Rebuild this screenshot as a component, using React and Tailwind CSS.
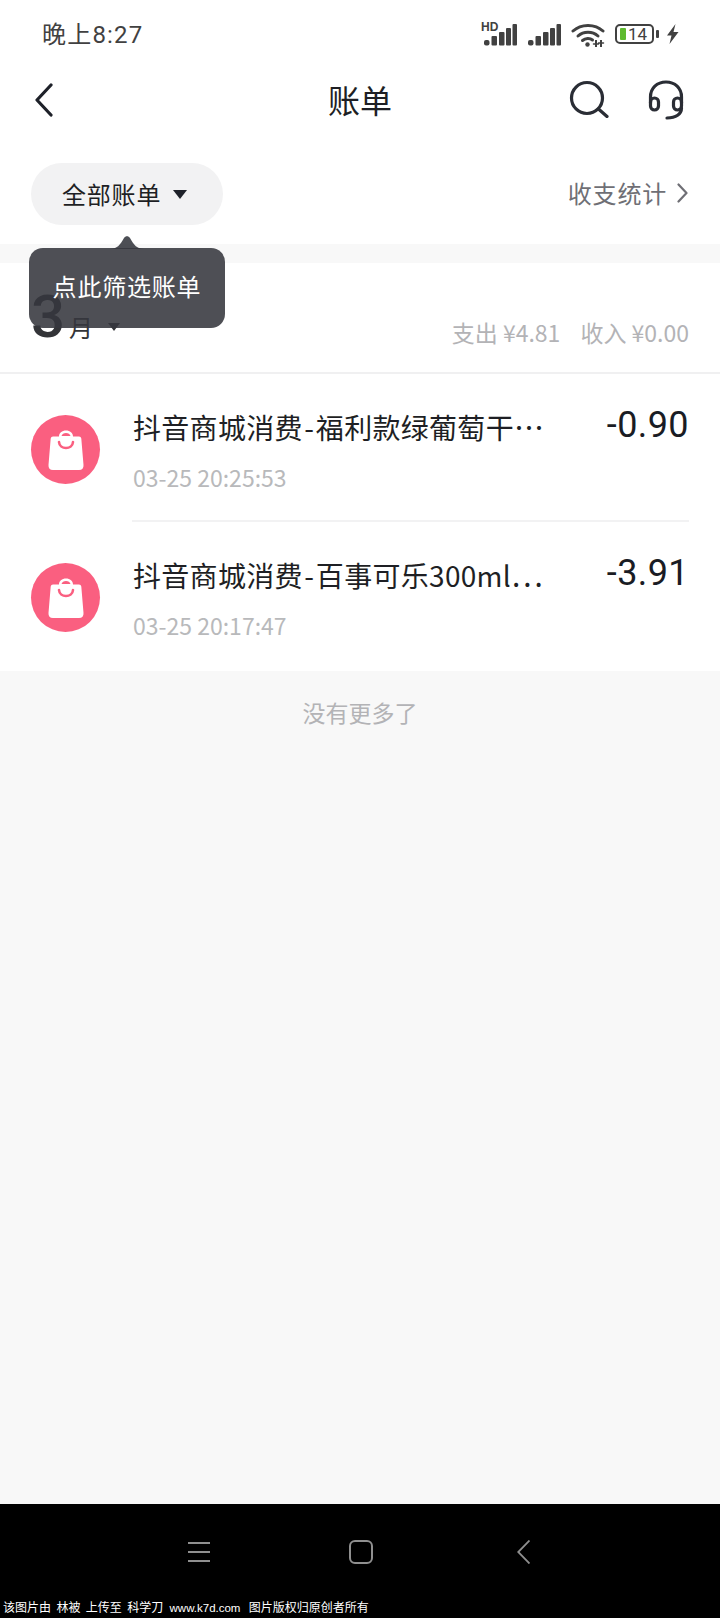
const FONT = '"Noto Sans CJK SC", "Noto Sans", sans-serif';

function SignalBars({ width = 34 }) {
  return (
    <svg width={width} height="22" viewBox="0 0 34 22" fill="#414141">
      <rect x="1" y="16" width="5.5" height="5.5" rx="2" />
      <rect x="8.5" y="12" width="5.5" height="9.5" rx="1" />
      <rect x="16" y="8" width="5.5" height="13.5" rx="1" />
      <rect x="23" y="4" width="5" height="17.5" rx="1" />
      <rect x="29.5" y="0" width="4.5" height="21.5" rx="1" />
    </svg>
  );
}

function Wifi() {
  return (
    <svg width="34" height="26" viewBox="0 0 34 26" fill="none" stroke="#414141" strokeWidth="3" strokeLinecap="round">
      <path d="M2 9C10 1.5 24 1.5 32 9" />
      <path d="M7 14C12.5 9 21.5 9 27 14" />
      <path d="M11.5 18.5C14.5 16 19 16 21.5 18" />
      <circle cx="16.5" cy="22.5" r="2.2" fill="#414141" stroke="none" />
      <path d="M25 18v7M30 18v7" strokeWidth="2" strokeLinecap="butt" />
      <path d="M22.5 22h5M27.5 21h5" strokeWidth="1.5" />
    </svg>
  );
}

function Bolt() {
  return (
    <svg width="13" height="20" viewBox="0 0 13 20" fill="#414141">
      <path d="M9.5 0L1 11.5H5.5L3.5 20L12.5 8H7.5Z" />
    </svg>
  );
}

function Chevron({ className, stroke, strokeWidth, d = "M17 2L3 17L17 32", box = "0 0 20 34" }) {
  return (
    <svg className={className} viewBox={box} fill="none" stroke={stroke} strokeWidth={strokeWidth} strokeLinecap="round" strokeLinejoin="round">
      <path d={d} />
    </svg>
  );
}

function ShopBag() {
  return (
    <div className="w-[69px] h-[69px] mt-[41px] rounded-full bg-[#fa5f80] flex items-center justify-center shrink-0">
      <svg width="36" height="40" viewBox="0 0 36 40">
        <path d="M11 6.5C11 3 14 .5 18 .5S25 3 25 6.5H31Q33 6.5 33.3 8.5L35.5 35Q35.8 40 31 40H5Q.2 40 .5 35L2.7 8.5Q3 6.5 5 6.5Z" fill="#ffffff" />
        <path d="M13.5 6C14 4 15.8 3 18 3S22 4 22.5 6Z" fill="#fa5f80" />
        <path d="M11 12C11.5 20 24.5 20 25 12" fill="none" stroke="#fa5f80" strokeWidth="2.6" strokeLinecap="round" />
      </svg>
    </div>
  );
}

function BillRow({ item, time, amount, divided, height }) {
  return (
    <div className={`${height} flex items-start pl-[31px] pr-[31px]`}>
      <ShopBag />
      <div className={`ml-[32px] flex-1 h-[148px] flex justify-between ${divided ? "border-b-2 border-[#f2f2f3]" : ""}`}>
        <div className="pt-[31px] pl-[1px]">
          <div className="text-[28px] leading-[42px] text-[#1e1f24] tracking-[0.3px] whitespace-nowrap">
            抖音商城消费<span className="mx-[1.5px]">-</span>{item}<span className="text-[30px] leading-[42px]">⋯</span>
          </div>
          <div className="mt-[13px] text-[23px] leading-[32px] text-[#b8b9bb] whitespace-nowrap">{time}</div>
        </div>
        <div className="pt-[30px] text-[36px] leading-[42px] tracking-[0.4px] text-[#1a1c24] whitespace-nowrap" style={{ fontFamily: "Roboto, sans-serif" }}>
          {amount}
        </div>
      </div>
    </div>
  );
}

export default function App() {
  return (
    <div className="w-[720px] h-[1618px] flex flex-col bg-[#f8f8f8] overflow-hidden" style={{ fontFamily: FONT }}>
      {/* Status bar */}
      <div className="h-[66px] bg-white flex items-center justify-between pl-[42px] pr-[41px] shrink-0">
        <span className="mt-[4px] text-[24px] leading-[32px] text-[#414141] tracking-[1.2px]" style={{ fontFamily: 'Roboto, "Noto Sans CJK SC", sans-serif' }}>
          晚上8:27
        </span>
        <div className="flex items-center mt-[2px]">
          <div className="relative w-[35px] h-[22px] mt-[2px]">
            <span className="absolute -left-[2px] -top-[2px] text-[12px] leading-[10px] font-bold text-[#414141]" style={{ fontFamily: '"Liberation Sans", sans-serif' }}>HD</span>
            <SignalBars />
          </div>
          <div className="ml-[9px] mt-[2px]"><SignalBars /></div>
          <div className="ml-[10px] mt-[2px]"><Wifi /></div>
          <div className="ml-[10px] w-[39px] h-[20px] border-2 border-[#414141] rounded-[5px] flex items-center pl-[3px]">
            <div className="w-[6px] h-[12px] bg-[#5fba2f] rounded-[1px]" />
            <span className="ml-[2px] text-[17px] leading-[16px] text-[#414141]" style={{ fontFamily: 'Roboto, sans-serif' }}>14</span>
          </div>
          <div className="ml-[2px] w-[3px] h-[8px] bg-[#414141] rounded-[1px]" />
          <div className="ml-[7px]"><Bolt /></div>
        </div>
      </div>

      {/* Navigation bar */}
      <div className="h-[68px] bg-white relative flex items-center justify-between pl-[34px] pr-[36px] shrink-0">
        <Chevron className="w-[20px] h-[34px]" stroke="#1e2129" strokeWidth="3.2" />
        <span className="absolute left-0 right-0 -mt-[2px] text-center text-[32px] leading-[44px] text-[#1e1f24]">账单</span>
        <div className="flex items-center">
          <svg className="-mt-[2px] -ml-[1px]" width="40" height="38" viewBox="0 0 40 38" fill="none" stroke="#2a2d35" strokeWidth="3.2" strokeLinecap="round">
            <circle cx="18" cy="18" r="15.5" />
            <path d="M29.5 29L38 36.5" />
          </svg>
          <svg className="ml-[39px]" width="36" height="40" viewBox="0 0 36 40" fill="none" stroke="#2a2d35" strokeWidth="3.2" strokeLinecap="round">
            <path d="M2.5 23V17C2.5 8 9 2 18 2S33.5 8 33.5 17V23" />
            <rect x="2.5" y="18" width="8" height="12" rx="4" />
            <rect x="25.5" y="18" width="8" height="12" rx="4" />
            <path d="M33.5 28C33.5 34 28 38 19 38" />
          </svg>
        </div>
      </div>

      {/* Filter row */}
      <div className="h-[110px] bg-white flex items-start justify-between pl-[31px] pr-[32px] shrink-0">
        <div className="relative mt-[29px]">
          <div className="w-[192px] h-[62px] rounded-[31px] bg-[#f2f2f3] flex items-center pl-[31px]">
            <span className="text-[24px] leading-[34px] text-[#1e1f24] tracking-[0.8px]">全部账单</span>
            <span className="ml-[12px] mt-[1px] w-0 h-0 border-l-[7px] border-r-[7px] border-t-[9px] border-l-transparent border-r-transparent border-t-[#1e2129]" />
          </div>
          {/* Hint bubble over the filter, see-through so the month shows under it */}
          <div className="absolute z-10 -left-[2px] top-[72px] flex flex-col items-center w-[196px]">
            <svg className="-mb-[1px] opacity-[0.88]" width="34" height="14" viewBox="0 0 34 14" fill="#35373e">
              <path d="M0 14C7 14 10 10 14 3C15.5 .5 18.5 .5 20 3C24 10 27 14 34 14Z" />
            </svg>
            <div className="w-[196px] h-[80px] rounded-[14px] bg-[#35373e]/[0.88] flex items-start justify-center pt-[20px]">
              <span className="text-[24px] leading-[36px] text-white tracking-[0.8px] whitespace-nowrap">点此筛选账单</span>
            </div>
          </div>
        </div>
        <div className="mt-[42px] flex items-center">
          <span className="text-[24px] leading-[34px] text-[#6f6f75] tracking-[0.8px]">收支统计</span>
          <Chevron className="ml-[10px] w-[11px] h-[20px]" stroke="#6f6f75" strokeWidth="2.2" d="M1.5 1.5L9.5 10L1.5 18.5" box="0 0 11 20" />
        </div>
      </div>

      <div className="h-[19px] shrink-0" />

      {/* Month summary */}
      <div className="h-[111px] bg-white border-b-2 border-[#f0f0f1] flex items-end justify-between pl-[31px] pr-[31px] pb-[22px] shrink-0">
        <div className="flex items-end">
          <span className="text-[60px] leading-[60px] font-medium text-[#333438] mb-[3px]" style={{ fontFamily: 'Roboto, sans-serif' }}>3</span>
          <span className="ml-[4px] mb-[6px] text-[24px] leading-[34px] text-[#333438]">月</span>
          <span className="ml-[15px] mb-[19px] w-0 h-0 border-l-[6px] border-r-[6px] border-t-[8px] border-l-transparent border-r-transparent border-t-[#333438]" />
        </div>
        <div className="flex items-end mb-[2px] text-[23px] leading-[32px] text-[#b3b3b6] whitespace-nowrap">
          <span>支出 ¥4.81</span>
          <span className="ml-[20px]">收入 ¥0.00</span>
        </div>
      </div>

      {/* Bill list */}
      <div className="bg-white shrink-0">
        <BillRow height="h-[148px]" item="福利款绿葡萄干" time="03-25 20:25:53" amount="-0.90" divided />
        <BillRow height="h-[149px]" item="百事可乐300ml" time="03-25 20:17:47" amount="-3.91" />
      </div>

      {/* End of list */}
      <div className="flex-1 flex justify-center pt-[24px]">
        <span className="text-[23px] leading-[34px] text-[#b3b3b6]">没有更多了</span>
      </div>

      {/* System navigation */}
      <div className="h-[114px] bg-black flex flex-col shrink-0">
        <div className="flex-1 flex items-start justify-center pt-[36px]">
          <div className="flex items-center -ml-[2px]">
            <svg width="22" height="20" viewBox="0 0 22 20" stroke="#8f8f8f" strokeWidth="2">
              <path d="M0 1H22M0 10H22M0 19H22" />
            </svg>
            <svg className="ml-[139px]" width="24" height="24" viewBox="0 0 24 24" fill="none" stroke="#8f8f8f" strokeWidth="2">
              <rect x="1" y="1" width="22" height="22" rx="5" />
            </svg>
            <svg className="ml-[144px]" width="13" height="24" viewBox="0 0 13 24" fill="none" stroke="#8f8f8f" strokeWidth="1.8">
              <path d="M12.5 .5L1.2 12L12.5 23.5" />
            </svg>
          </div>
        </div>
        <div className="h-[24px] pl-[3px] pt-[3px] text-[12px] leading-[20px] text-white whitespace-pre">
          该图片由  林被  上传至  科学刀  <span className="ml-[1px] mr-[3px] text-[11.5px]" style={{ fontFamily: '"Liberation Sans", sans-serif' }}>www.k7d.com</span>  图片版权归原创者所有
        </div>
      </div>
    </div>
  );
}
